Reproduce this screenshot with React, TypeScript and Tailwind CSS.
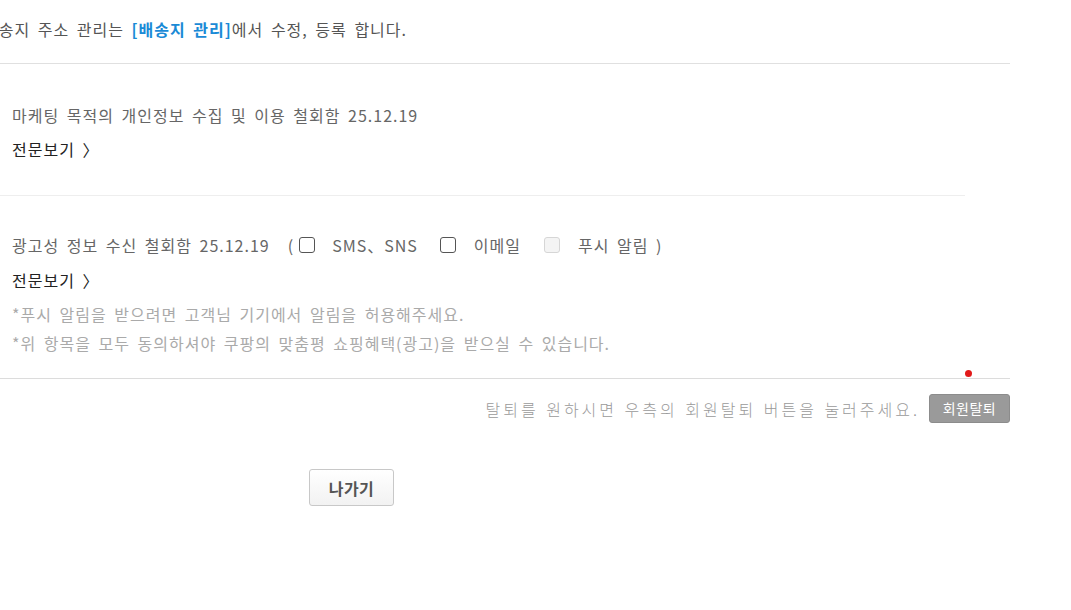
import React from "react";

const Checkbox = ({ disabled }: { disabled?: boolean }) => (
  <span
    className={
      disabled
        ? "inline-block w-[16px] h-[16px] rounded-[3px] border border-[#d6d6d6] bg-[#f4f4f4]"
        : "inline-block w-[16px] h-[16px] rounded-[3px] border-[1.5px] border-[#555] bg-white"
    }
  />
);

export default function App() {
  return (
    <div
      className="relative w-[1071px] h-[610px] bg-white text-[16px] text-[#666] overflow-hidden tracking-[1px] [word-spacing:3px]"
      style={{ fontFamily: '"Noto Sans CJK KR", "Noto Sans", sans-serif' }}
    >
      <div className="w-[1010px]">
        <div className="pt-[17px] pb-[22px] border-b border-[#e0e0e0] leading-[24px] text-[#555] -ml-[17px] whitespace-nowrap">
          배송지 주소 관리는 <span className="font-bold text-[#1a8ad6]">[배송지 관리]</span>에서 수정, 등록 합니다.
        </div>

        <div className="w-[965px] pl-[12px] pt-[39px] pb-[34px] border-b border-[#eeeeee] leading-[24px]">
          <div>마케팅 목적의 개인정보 수집 및 이용 철회함 25.12.19</div>
          <div className="mt-[10px] text-[#222]">전문보기 〉</div>
        </div>

        <div className="pl-[12px] pt-[37px] pb-[23px] border-b border-[#dcdcdc] leading-[24px]">
          <div className="flex items-center">
            <span>광고성 정보 수신 철회함 25.12.19</span>
            <span className="ml-[18px]">(</span>
            <span className="ml-[5px] flex"><Checkbox /></span>
            <span className="ml-[17px]">SMS、SNS</span>
            <span className="ml-[22px] flex"><Checkbox /></span>
            <span className="ml-[18px]">이메일</span>
            <span className="ml-[23px] flex"><Checkbox disabled /></span>
            <span className="ml-[18px]">푸시 알림 )</span>
          </div>
          <div className="mt-[11px] text-[#222]">전문보기 〉</div>
          <div className="mt-[10px] text-[#aaa]">*푸시 알림을 받으려면 고객님 기기에서 알림을 허용해주세요.</div>
          <div className="mt-[5px] text-[#aaa]">*위 항목을 모두 동의하셔야 쿠팡의 맞춤평 쇼핑혜택(광고)을 받으실 수 있습니다.</div>
        </div>

        <div className="mt-[15px] flex items-center justify-end gap-[9px]">
          <span className="text-[#9a9a9a] text-[16px] font-light tracking-[3px] [word-spacing:1px]">
            탈퇴를 원하시면 우측의 회원탈퇴 버튼을 눌러주세요.
          </span>
          <button className="h-[29px] w-[81px] rounded-[3px] bg-[#9a9a9a] border border-[#8c8c8c] text-white text-[14px] tracking-[0.5px]">
            회원탈퇴
          </button>
        </div>

        <div className="mt-[46px] pl-[309px]">
          <button className="h-[37px] w-[85px] rounded-[3px] border border-[#c8c8c8] bg-gradient-to-b from-white to-[#f2f2f2] text-[#555] font-bold text-[16px] tracking-[0.5px]">
            나가기
          </button>
        </div>
      </div>

      <span className="absolute left-[965px] top-[370px] w-[7px] h-[7px] rounded-full bg-[#e21a1a]" />
    </div>
  );
}
